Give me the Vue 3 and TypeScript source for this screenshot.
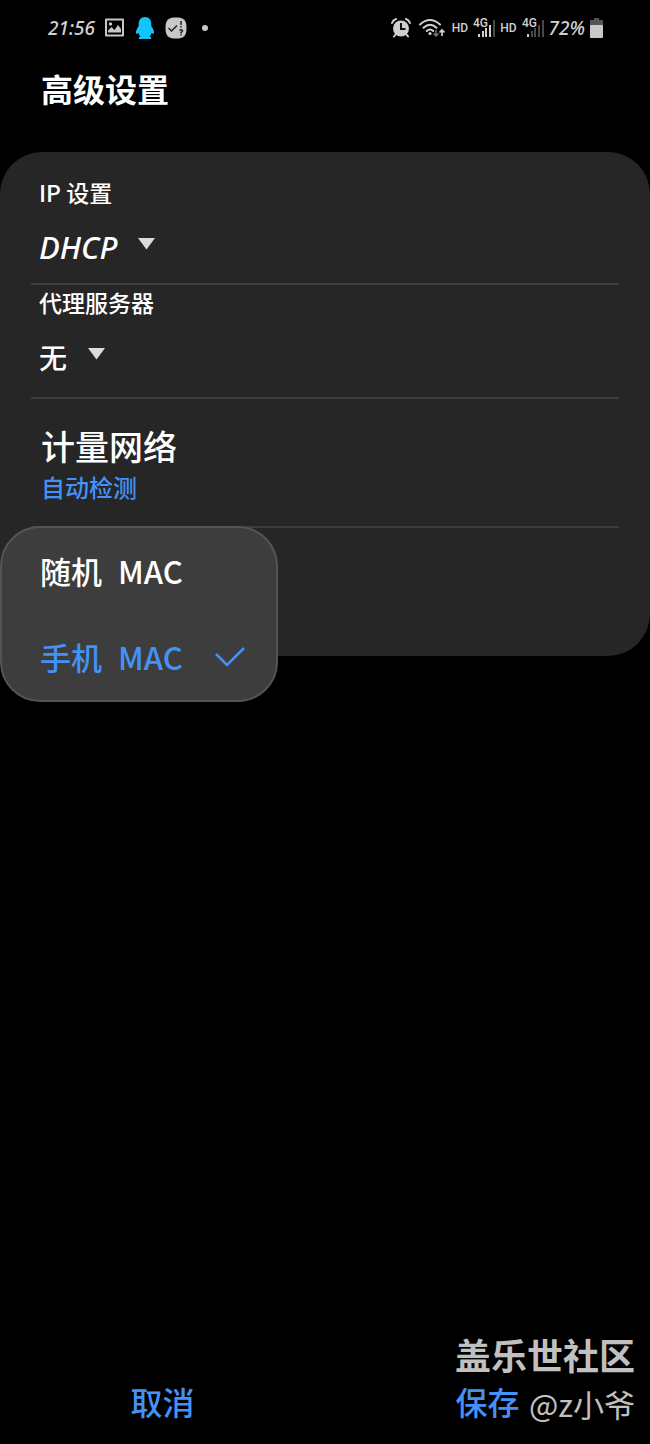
<script setup lang="ts">
import { ref } from 'vue'

interface MacOption {
  id: string
  name: string
}

const macOptions: MacOption[] = [
  { id: 'random', name: '随机' },
  { id: 'phone', name: '手机' },
]
const selectedMac = ref('phone')
const ipMode = ref('DHCP')
const proxy = ref('无')

// Number of lit bars for each SIM card
const sims = [
  { id: 1, lit: 4 },
  { id: 2, lit: 1 },
]
const bars = [
  { x: 5, h: 3 },
  { x: 9, h: 6 },
  { x: 12, h: 9 },
  { x: 16, h: 12 },
  { x: 20, h: 17 },
]
</script>

<template>
  <div class="screen">
    <header class="status">
      <div class="status-left">
        <span class="clock">21:56</span>
        <svg class="picture" width="20" height="20" viewBox="0 0 20 20">
          <path fill="#c8c8c8" fill-rule="evenodd" d="M1 0.500h17q1 0 1 1v16q0 1-1 1H1q-1 0-1-1V1.500q0-1 1-1zM2 2.500v14h15v-14z" />
          <circle cx="5.500" cy="6" r="1.700" fill="#c8c8c8" />
          <path fill="#c8c8c8" d="M3 12.500 6.500 9l3 3L13 7l3 4v3.500H3z" />
        </svg>
        <svg class="penguin" width="20" height="24" viewBox="0 0 20 24">
          <path fill="#12c4fa" d="M10 1c4.300 0 6.300 3 6.300 7v2c1.800 2.500 3.200 5.500 2.600 7.500-.4 1-1.500.3-2.200-.7-.3 1.500-1 2.700-2 3.600 1.500.6 2.300 2.600.6 2.600H4.700c-1.700 0-.9-2 .6-2.600-1-.9-1.700-2.100-2-3.600-.7 1-1.800 1.700-2.200.7-.6-2 .8-5 2.600-7.500V8c0-4 2-7 6.300-7z" />
        </svg>
        <svg class="badge" width="22" height="22" viewBox="0 0 22 22">
          <path fill="#c8c8c8" d="M11 0.500c8 0 10.500 2.500 10.500 10.500S19 21.500 11 21.500.5 19 .5 11 3 .5 11 .5z" />
          <path fill="none" stroke="#222" stroke-width="1.500" d="m3.500 11 3 3L12 8.500M16 4v4M16 9v1.500M14.500 13.500q1.500-1.500 3 0 .3 1-1.500 2v1M16 17.300v1.200" />
        </svg>
        <svg class="dot" width="8" height="8" viewBox="0 0 8 8"><circle cx="4" cy="4" r="3" fill="#c8c8c8" /></svg>
      </div>
      <div class="status-right">
        <svg width="20" height="20" viewBox="0 0 20 20">
          <circle cx="10" cy="10.500" r="8" fill="#d0d0d0" />
          <path fill="none" stroke="#d0d0d0" stroke-width="2" stroke-linecap="round" d="M1 5q1-3 4-4M19 5q-1-3-4-4M4.500 16.500 3 18.500M15.500 16.500l1.500 2" />
          <path fill="none" stroke="#111" stroke-width="2" d="M10 5v6h4.500" />
        </svg>
        <svg class="wifi" width="26" height="20" viewBox="0 0 26 20">
          <path fill="none" stroke="#d0d0d0" stroke-width="2" stroke-linecap="round" d="M1 6.500q10-9 20 0M4.500 9.800q6.500-6 13 0M7.800 13q3.200-3 6.400 0" />
          <circle cx="11" cy="15.500" r="1.600" fill="#d0d0d0" />
          <path fill="none" stroke="#777" stroke-width="1.500" d="M17 12v6M14.500 15.500 17 18l2.500-2.500" />
          <path fill="none" stroke="#d0d0d0" stroke-width="1.700" d="M23 18v-6M20.500 14.500 23 12l2.500 2.500" />
        </svg>
        <template v-for="sim in sims" :key="sim.id">
          <span class="hd">HD</span>
          <svg class="signal" width="22" height="22" viewBox="0 0 22 22">
            <rect
              v-for="(bar, i) in bars"
              :key="bar.x"
              :x="bar.x"
              :y="20 - bar.h"
              width="2"
              :height="bar.h"
              :fill="i < sim.lit ? '#d0d0d0' : '#484848'"
            />
            <text class="gen" x="0" y="10">4G</text>
          </svg>
        </template>
        <span class="percent">72%</span>
        <svg width="14" height="21" viewBox="0 0 14 21">
          <path fill="#555" d="M4 0h5v2h4v6H0V2h4z" />
          <rect y="7" width="13" height="13" rx="1" fill="#c8c8c8" />
        </svg>
      </div>
    </header>

    <h1 class="title">高级设置</h1>

    <main class="card">
      <section class="row ip">
        <label class="label" for="ip-mode">IP 设置</label>
        <div class="picker">
          <select id="ip-mode" v-model="ipMode" class="latin">
            <option>DHCP</option>
          </select>
          <svg class="arrow" width="18" height="12" viewBox="0 0 18 12"><path d="M0 0h17L8.500 11.500z" fill="#dcdcdc" /></svg>
        </div>
      </section>
      <section class="row proxy">
        <label class="label" for="proxy">代理服务器</label>
        <div class="picker">
          <select id="proxy" v-model="proxy">
            <option>无</option>
          </select>
          <svg class="arrow" width="18" height="12" viewBox="0 0 18 12"><path d="M0 0h17L8.500 11.500z" fill="#dcdcdc" /></svg>
        </div>
      </section>
      <button type="button" class="row metered">
        <span class="name">计量网络</span>
        <span class="hint">自动检测</span>
      </button>
      <section class="mac">
        <div class="menu" role="listbox">
          <button
            v-for="option in macOptions"
            :key="option.id"
            type="button"
            role="option"
            class="choice"
            :class="{ chosen: option.id === selectedMac }"
            :aria-selected="option.id === selectedMac"
            @click="selectedMac = option.id"
          >
            <span>{{ option.name }}</span>
            <span>MAC</span>
            <svg v-if="option.id === selectedMac" class="tick" width="30" height="20" viewBox="0 0 30 20">
              <path d="M1 7 12 18 29 1" fill="none" stroke="#4491f8" stroke-width="2.500" />
            </svg>
          </button>
        </div>
      </section>
    </main>

    <footer class="actions">
      <button type="button">取消</button>
      <button type="button">保存</button>
    </footer>

    <div class="watermark">
      <strong>盖乐世社区</strong>
      <span>@z小爷</span>
    </div>
  </div>
</template>

<style>
body {
  margin: 0;
  background: #000;
}
</style>

<style scoped>
.screen {
  position: relative;
  display: flex;
  flex-direction: column;
  box-sizing: border-box;
  min-height: 100vh;
  background: #000;
  color: #fff;
  font-family: "Noto Sans CJK SC", sans-serif;
  font-weight: 500;
}
svg {
  display: block;
  flex: none;
}
button,
select {
  margin: 0;
  padding: 0;
  border: 0;
  background: none;
  color: inherit;
  font: inherit;
  text-align: left;
  cursor: pointer;
}
.status {
  display: flex;
  align-items: center;
  justify-content: space-between;
  height: 56px;
  padding: 0 46px 0 48px;
  color: #d0d0d0;
}
.status-left,
.status-right {
  display: flex;
  align-items: center;
}
.status-left {
  gap: 10px;
}
.dot {
  margin-left: 4px;
}
.status-right {
  gap: 5px;
}
.clock,
.percent {
  font-family: "Noto Sans", sans-serif;
  font-style: italic;
  font-size: 19px;
  line-height: 24px;
}
.wifi {
  margin: 0 2px 0 3px;
}
.hd {
  font-family: Roboto, sans-serif;
  font-size: 12px;
  line-height: 16px;
}
.gen {
  fill: #d0d0d0;
  font: 500 12px Roboto, sans-serif;
}
.title {
  margin: 8px 0 0;
  padding: 0 41px;
  font-size: 32px;
  line-height: 48px;
  font-weight: 700;
}
.card {
  margin-top: 40px;
  padding: 0 31px;
  border-radius: 42px;
  background: #262626;
}
.row {
  display: block;
  box-sizing: border-box;
  width: 100%;
  padding: 0 8px;
  border-bottom: 2px solid #3d3d3d;
}
.label,
.name,
.hint {
  display: block;
}
.label {
  font-size: 23px;
  line-height: 32px;
}
.ip {
  padding-top: 24px;
  padding-bottom: 13px;
}
.proxy {
  padding-top: 1px;
  padding-bottom: 17px;
}
.picker {
  display: flex;
  align-items: center;
  gap: 20px;
  margin-top: 16px;
}
select {
  appearance: none;
  height: 46px;
  font-size: 28px;
  line-height: 46px;
}
.latin {
  font-family: "Noto Sans", sans-serif;
  font-size: 31px;
  font-style: italic;
}
.arrow {
  margin-bottom: 6px;
}
.metered {
  padding: 24px 10px 21px;
}
.name {
  font-size: 34px;
  line-height: 46px;
}
.hint {
  color: #4491f8;
  font-size: 24px;
  line-height: 36px;
}
.mac {
  position: relative;
  height: 128px;
}
.menu {
  position: absolute;
  top: -2px;
  left: -31px;
  box-sizing: border-box;
  width: 278px;
  border: 2px solid #545454;
  border-radius: 40px;
  background: #3d3d3d;
}
.choice {
  display: flex;
  align-items: center;
  gap: 16px;
  width: 100%;
  height: 86px;
  padding-left: 38px;
  font-size: 31px;
  line-height: 46px;
}
.chosen {
  color: #4491f8;
}
.tick {
  margin-left: 16px;
}
.actions {
  display: flex;
  margin-top: auto;
  padding-bottom: 20px;
}
.actions button {
  flex: 1;
  color: #4491f8;
  font-family: "Liberation Sans", "Noto Sans CJK SC", sans-serif;
  font-size: 32px;
  line-height: 40px;
  text-align: center;
}
.watermark {
  position: absolute;
  right: 15px;
  bottom: 20px;
  display: flex;
  flex-direction: column;
  gap: 6px;
  align-items: flex-end;
  color: #c0c0c0;
  pointer-events: none;
}
.watermark strong {
  font-family: "Liberation Sans", "Noto Sans CJK SC", sans-serif;
  font-size: 36px;
  line-height: 40px;
  font-weight: 700;
}
.watermark span {
  font-size: 31px;
  line-height: 40px;
  font-weight: 400;
}
</style>
